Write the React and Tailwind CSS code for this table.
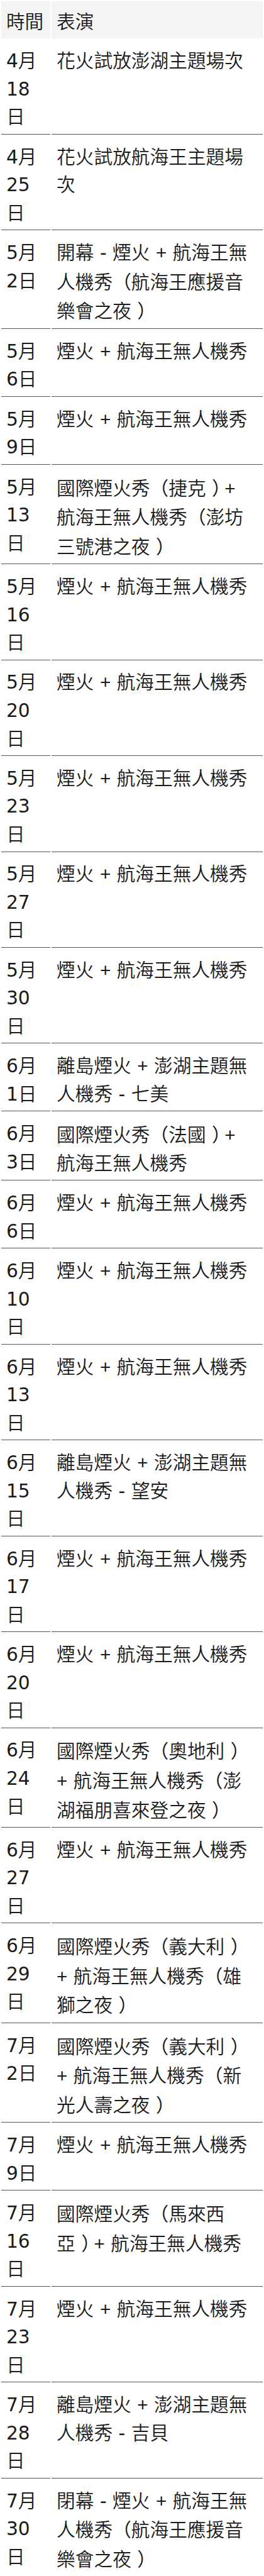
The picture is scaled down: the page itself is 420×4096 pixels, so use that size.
import React from "react";

const rows = [
  { d: ["4月", "18", "日"], t: ["花火試放澎湖主題場次"] },
  { d: ["4月", "25", "日"], t: ["花火試放航海王主題場", "次"] },
  { d: ["5月", "2日"], t: ["開幕 - 煙火 + 航海王無", "人機秀（航海王應援音", "樂會之夜）"] },
  { d: ["5月", "6日"], t: ["煙火 + 航海王無人機秀"] },
  { d: ["5月", "9日"], t: ["煙火 + 航海王無人機秀"] },
  { d: ["5月", "13", "日"], t: ["國際煙火秀（捷克）+", "航海王無人機秀（澎坊", "三號港之夜）"] },
  { d: ["5月", "16", "日"], t: ["煙火 + 航海王無人機秀"] },
  { d: ["5月", "20", "日"], t: ["煙火 + 航海王無人機秀"] },
  { d: ["5月", "23", "日"], t: ["煙火 + 航海王無人機秀"] },
  { d: ["5月", "27", "日"], t: ["煙火 + 航海王無人機秀"] },
  { d: ["5月", "30", "日"], t: ["煙火 + 航海王無人機秀"] },
  { d: ["6月", "1日"], t: ["離島煙火 + 澎湖主題無", "人機秀 - 七美"] },
  { d: ["6月", "3日"], t: ["國際煙火秀（法國）+", "航海王無人機秀"] },
  { d: ["6月", "6日"], t: ["煙火 + 航海王無人機秀"] },
  { d: ["6月", "10", "日"], t: ["煙火 + 航海王無人機秀"] },
  { d: ["6月", "13", "日"], t: ["煙火 + 航海王無人機秀"] },
  { d: ["6月", "15", "日"], t: ["離島煙火 + 澎湖主題無", "人機秀 - 望安"] },
  { d: ["6月", "17", "日"], t: ["煙火 + 航海王無人機秀"] },
  { d: ["6月", "20", "日"], t: ["煙火 + 航海王無人機秀"] },
  { d: ["6月", "24", "日"], t: ["國際煙火秀（奧地利）", "+ 航海王無人機秀（澎", "湖福朋喜來登之夜）"] },
  { d: ["6月", "27", "日"], t: ["煙火 + 航海王無人機秀"] },
  { d: ["6月", "29", "日"], t: ["國際煙火秀（義大利）", "+ 航海王無人機秀（雄", "獅之夜）"] },
  { d: ["7月", "2日"], t: ["國際煙火秀（義大利）", "+ 航海王無人機秀（新", "光人壽之夜）"] },
  { d: ["7月", "9日"], t: ["煙火 + 航海王無人機秀"] },
  { d: ["7月", "16", "日"], t: ["國際煙火秀（馬來西", "亞）+ 航海王無人機秀"] },
  { d: ["7月", "23", "日"], t: ["煙火 + 航海王無人機秀"] },
  { d: ["7月", "28", "日"], t: ["離島煙火 + 澎湖主題無", "人機秀 - 吉貝"] },
  { d: ["7月", "30", "日"], t: ["閉幕 - 煙火 + 航海王無", "人機秀（航海王應援音", "樂會之夜）"] },
];

function Line({ s }) {
  const tokens = s.split(/([+（）])/).filter((x) => x !== "");
  return (
    <span className="block whitespace-pre">
      {tokens.map((tk, i) => {
        if (tk === "+")
          return (
            <span key={i} className="font-['Liberation_Sans',sans-serif]">
              +
            </span>
          );
        if (tk === "（")
          return (
            <span
              key={i}
              className="inline-block w-[29.7px] text-right font-['Noto_Sans_CJK_TC',sans-serif] [text-spacing-trim:space-all]"
            >
              （
            </span>
          );
        if (tk === "）")
          return (
            <span
              key={i}
              className="inline-block w-[29.7px] pl-[4px] text-center font-['Noto_Sans_CJK_TC',sans-serif] [font-feature-settings:'halt'] [text-spacing-trim:space-all]"
            >
              ）
            </span>
          );
        return <React.Fragment key={i}>{tk}</React.Fragment>;
      })}
    </span>
  );
}

export default function App() {
  return (
    <div className="w-[420px] bg-white">
      <table className="w-full table-fixed border-separate border-spacing-[2.97px] font-['DejaVu_Sans','Noto_Sans_CJK_TC_DemiLight','Noto_Sans_CJK_TC_Light','Noto_Sans_CJK_TC',sans-serif] text-[29.7px] leading-[44.55px] text-[#1a1a1a]">
        <colgroup>
          <col className="w-[78.2px]" />
          <col />
        </colgroup>
        <thead>
          <tr>
            <th className="bg-[#f4f4f4] px-[7.92px] pt-[10.9px] pb-[3.95px] text-left align-top font-normal">
              時間
            </th>
            <th className="bg-[#f4f4f4] px-[7.92px] pt-[10.9px] pb-[3.95px] text-left align-top font-normal">
              表演
            </th>
          </tr>
        </thead>
        <tbody>
          {rows.map((r, i) => (
            <tr key={i}>
              <td className="border-b border-[#555555] px-[7.92px] pt-[11.9px] pb-[3.94px] align-top">
                {r.d.map((x, j) => (
                  <span key={j} className="block whitespace-nowrap">
                    {x}
                  </span>
                ))}
              </td>
              <td className="border-b border-[#555555] px-[7.92px] pt-[11.9px] pb-[3.94px] align-top">
                {r.t.map((x, j) => (
                  <Line key={j} s={x} />
                ))}
              </td>
            </tr>
          ))}
        </tbody>
      </table>
    </div>
  );
}
